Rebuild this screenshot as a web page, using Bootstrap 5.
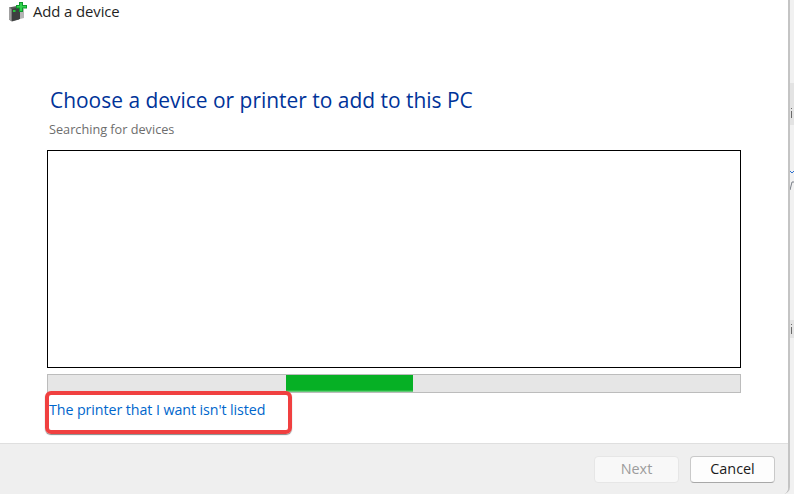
<!DOCTYPE html>
<html lang="en">
<head>
<meta charset="utf-8">
<title>Add a device</title>
<link href="https://cdn.jsdelivr.net/npm/bootstrap@5.3.0/dist/css/bootstrap.min.css" rel="stylesheet">
<style>
html,body{height:494px;overflow:hidden;background:#f1f1f1;font-family:"Open Sans","Noto Sans","Liberation Sans",sans-serif;}
.desk{height:494px;width:794px;}
.wizard{position:relative;width:790px;height:494px;background:#fff;border-right:2px solid #c4c4c4;border-bottom-right-radius:7px;overflow:hidden;}
.titlebar{height:23px;padding-left:8px;gap:6px;font-size:14.9px;color:#1f1f1f;letter-spacing:-.1px;}
.bodyarea{padding:64px 47px 0 47px;position:relative;}
.heading{font-size:20.95px;line-height:26px;color:#003399;margin:0 0 0 3px;font-weight:400;white-space:nowrap;}
.subhead{font-size:12.7px;line-height:16px;color:#6d6d6d;margin:8px 0 13px 2px;}
.devlist{height:218px;border:1px solid #000;background:#fff;}
.scanbar{height:19px;margin-top:6px;border:1px solid #bcbcbc;border-radius:0;background:#e6e6e6;}
.scanfill{margin-left:238px;width:127px;background:linear-gradient(#06b025 88%,#7fd48f);border-radius:0;}
.missing{font-size:14.25px;line-height:18px;color:#0066cc;text-decoration:none;display:block;margin:8px 0 0 2px;letter-spacing:-.08px;white-space:nowrap;}
.markbox{position:absolute;left:45px;top:368px;width:247px;height:43px;border:4px solid #f04040;border-radius:6px;box-shadow:0 1px 1px #888;}
.footbar{height:51px;background:#efefef;border-top:1px solid #dfdfdf;padding-right:13px;gap:11px;}
.wbtn{width:85px;height:27px;padding:0;font-size:14.4px;line-height:24px;border-radius:4px;background:#fdfdfd;border:1px solid #c9c9c9;border-bottom-color:#a8a8a8;color:#1a1a1a;}
.wbtn:disabled{opacity:1;background:#f8f8f8;border-color:#e6e6e6;color:#9c9c9c;}
.sliver{position:absolute;left:790px;width:4px;background:#e3e3e3;}
.sliver-mark{position:absolute;left:790px;}
</style>
</head>
<body>
<div class="desk position-relative">
  <div class="sliver" style="top:83px;height:42px"></div>
  <div class="sliver" style="top:320px;height:18px"></div>
  <svg class="sliver-mark" style="top:106px" width="4" height="14" aria-hidden="true"><path d="M1.500 2V3M1.500 5V12" stroke="#6a6a6a" fill="none"/></svg>
  <svg class="sliver-mark" style="top:168px" width="4" height="24" aria-hidden="true"><path d="M0 3 2 5 4 3" stroke="#2a6fd0" fill="none"/><path d="M0 22 2 14H4" stroke="#7a7f88" fill="none"/></svg>
  <svg class="sliver-mark" style="top:322px" width="4" height="14" aria-hidden="true"><path d="M1.500 2V3M1.500 5V12" stroke="#6a6a6a" fill="none"/></svg>
  <div class="wizard d-flex flex-column">
    <div class="titlebar d-flex align-items-center">
      <svg width="19" height="20" viewBox="0 0 19 20" aria-hidden="true">
        <path d="M1 5.500 11 3.500V17.500L4 19.500 1 17.500Z" fill="#5a5a5a"/>
        <path d="M1 5.500 3.500 7V19.500L1 17.500Z" fill="#a0a0a0"/>
        <path d="M4 7 12 5V17L4 19Z" fill="#3d4040"/>
        <rect x="5" y="8" width="2.500" height="2" fill="#27c23c"/>
        <path d="M15 6.500H16V16L12 17V7Z" fill="#b5b5b5"/>
        <path d="M11 0H15V3H19V6.500H15V10H11V6.500H8V3H11Z" fill="#0e9a2c"/>
        <path d="M12 1H14V4H18V5.500H14V9H12V5.500H9V4H12Z" fill="#32d24e"/>
      </svg>
      <span>Add a device</span>
    </div>
    <div class="bodyarea flex-grow-1">
      <h1 class="heading">Choose a device or printer to add to this PC</h1>
      <p class="subhead">Searching for devices</p>
      <div class="devlist"></div>
      <div class="progress scanbar"><div class="progress-bar scanfill"></div></div>
      <a class="missing" href="#">The printer that I want isn't listed</a>
      <div class="markbox"></div>
    </div>
    <div class="footbar d-flex justify-content-end align-items-center">
      <button class="btn wbtn" disabled>Next</button>
      <button class="btn wbtn">Cancel</button>
    </div>
  </div>
</div>
<script src="https://cdn.jsdelivr.net/npm/bootstrap@5.3.0/dist/js/bootstrap.bundle.min.js"></script>
</body>
</html>
